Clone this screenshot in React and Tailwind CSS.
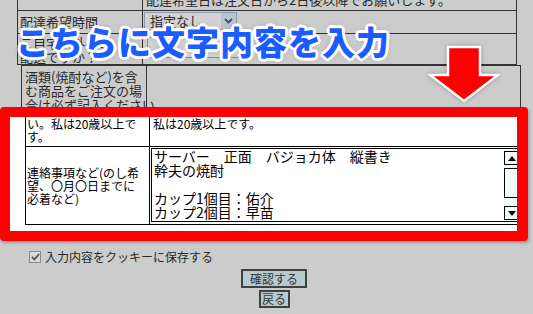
import React from 'react';

function Radio({ label }) {
    return (
        <span className="flex items-center">
            <span className="mr-[2px] h-[11px] w-[11px] rounded-full border border-[#9a9a9a] bg-[#d6d6d6]" />
            <span className="text-[#444]">{label}</span>
        </span>
    );
}

function ScrollButton({ up }) {
    return (
        <div className="flex h-[14px] items-center justify-center border border-black bg-[#f2fcfc]">
            <svg width="8" height="5" viewBox="0 0 8 5">
                <polygon points={up ? '0,5 8,5 4,0' : '0,0 8,0 4,5'} fill="#000" />
            </svg>
        </div>
    );
}

export default function App() {
    return (
        <div className="relative h-[314px] w-[533px] overflow-hidden bg-[#cccccc] text-[#2a2a2a] [font-family:'Noto_Sans_CJK_JP',sans-serif]">
            {/* upper form table */}
            <div className="ml-[17px] w-[500px] border-x border-b border-[#333] text-[13px] leading-[14px]">
                <div className="-mt-[8px] flex h-[19px] border-b border-[#333]">
                    <div className="w-[125px] border-r border-[#333]" />
                    <div className="flex-1 whitespace-nowrap pl-[3px] pt-[1px]">
                        配達希望日は注文日から2日後以降でお願いします。
                    </div>
                </div>
                <div className="flex h-[23px] border-b border-[#333]">
                    <div className="flex w-[125px] items-center border-r border-[#333] pl-[2px]">
                        配達希望時間
                    </div>
                    <div className="flex-1 pl-[1px] pt-[1px]">
                        <div className="flex h-[18px] w-[93px] items-center border border-[#8c9ab0] bg-[#d2d2d2]">
                            <span className="flex-1 pl-[5px]">指定なし</span>
                            <span className="flex h-[16px] w-[15px] items-center justify-center bg-[#b9c3d6]">
                                <svg width="9" height="6" viewBox="0 0 9 6">
                                    <path d="M1 1 L4.5 4.5 L8 1" stroke="#3d4a66" strokeWidth="1.8" fill="none" />
                                </svg>
                            </span>
                        </div>
                    </div>
                </div>
                <div className="flex h-[30px]">
                    <div className="w-[125px] border-r border-[#333] pl-[2px] pt-[2px] leading-[14px]">
                        ご自宅以外への<br />配送ですか？
                    </div>
                    <div className="flex-1 pl-[4px] pt-[3px]">
                        <div className="h-[21px] w-[95px] border border-[#8c8c8c] bg-[#d2d2d2]" />
                    </div>
                </div>
            </div>

            {/* lower form table */}
            <div className="ml-[21px] w-[500px] border-x border-t border-[#333] text-[13px] leading-[14px]">
                <div className="flex h-[90px]">
                    <div className="w-[125px] whitespace-nowrap border-r border-[#333] pl-[3px] pt-[4px]">
                        酒類(焼酎など)を含<br />む商品をご注文の場<br />合は必ず記入ください。
                    </div>
                    <div className="flex flex-1 gap-[6px] pl-[6px] pt-[31px]">
                        <Radio label="はい" />
                        <Radio label="いいえ" />
                    </div>
                </div>
            </div>

            {/* cookie + buttons */}
            <div className="ml-[29px] mt-[94px] flex items-center text-[12px] leading-[13px]">
                <span className="mr-[4px] flex h-[12px] w-[12px] items-center justify-center border border-[#8a8a8a] bg-[#d8d8d8]">
                    <svg width="9" height="8" viewBox="0 0 9 8">
                        <path d="M1 4 L3.5 6.5 L8 1" stroke="#555" strokeWidth="1.8" fill="none" />
                    </svg>
                </span>
                入力内容をクッキーに保存する
            </div>
            <div className="mt-[6px] flex flex-col items-center gap-[2px] pl-[15px] text-[12px]">
                <button className="h-[19px] w-[66px] border-2 border-[#404040] bg-[#b7cbcf] leading-[14px] text-[#333]">
                    確認する
                </button>
                <button className="h-[18px] w-[31px] border-2 border-[#404040] bg-[#b7cbcf] leading-[14px] text-[#333]">
                    戻る
                </button>
            </div>

            {/* annotation: zoomed inset */}
            <div className="absolute left-0 top-[107px] h-[134px] w-[528px] overflow-hidden rounded-[4px] border-[10px] border-r-[11px] border-[#ff0000] bg-white shadow-[1px_2px_3px_rgba(0,0,0,0.25)]">
                <div className="ml-[15px] w-[520px] border-l border-black text-[12px] leading-[13px] text-black">
                    <div className="flex h-[30px] border-b border-black">
                        <div className="w-[124px] whitespace-nowrap border-r border-black pl-[1px]">
                            い。私は20歳以上で<br />す。
                        </div>
                        <div className="flex-1 pl-[3px]">私は20歳以上です。</div>
                    </div>
                    <div className="flex h-[78px] border-b border-black">
                        <div className="flex w-[124px] items-center whitespace-nowrap border-r border-black pl-[1px]">
                            <div>
                                連絡事項など(のし希<br />望、〇月〇日までに<br />必着など)
                            </div>
                        </div>
                        <div className="flex-1 p-[1px]">
                            <div className="flex h-[74px] w-[370px] border border-black bg-white">
                                <div className="flex-1 whitespace-pre pl-[2px] text-[14px] leading-[14px]">
                                    {'サーバー　正面　バジョカ体　縦書き\n幹夫の焼酎\n\nカップ1個目：佑介\nカップ2個目：早苗'}
                                </div>
                                <div className="flex w-[16px] flex-col bg-[#eefbfb] pb-[1px] pt-[2px]">
                                    <ScrollButton up />
                                    <div className="mt-[3px] h-[30px] border border-black bg-[#f2fcfc]" />
                                    <div className="mt-auto">
                                        <ScrollButton />
                                    </div>
                                </div>
                            </div>
                        </div>
                    </div>
                </div>
            </div>

            {/* annotation: caption */}
            <div className="absolute left-[16px] top-[25px] whitespace-nowrap text-[33px] font-black leading-none tracking-[1px] text-[#1a5cff] [text-shadow:3px_0_0_#fff,-3px_0_0_#fff,0_3px_0_#fff,0_-3px_0_#fff,2px_2px_0_#fff,-2px_2px_0_#fff,2px_-2px_0_#fff,-2px_-2px_0_#fff,0_0_6px_rgba(0,0,0,0.35)]">
                こちらに文字内容を入力
            </div>

            {/* annotation: arrow */}
            <svg
                className="absolute left-[428px] top-[45px] drop-shadow-[0_0_2px_rgba(0,0,0,0.3)]"
                width="72"
                height="58"
                viewBox="0 0 72 58"
            >
                <polygon
                    points="20,2 52,2 52,30 70,30 36,56 2,30 20,30"
                    fill="#ff0000"
                    stroke="#fff"
                    strokeWidth="2.5"
                />
            </svg>
        </div>
    );
}
